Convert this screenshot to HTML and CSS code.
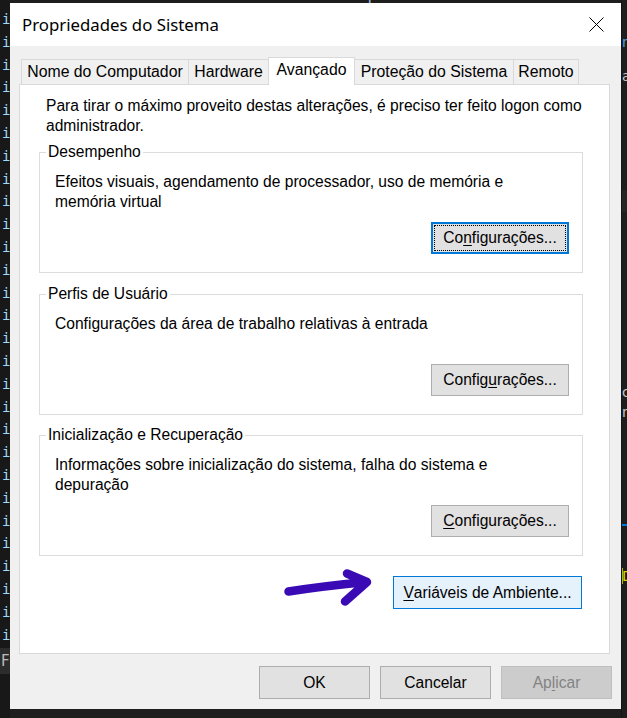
FILE: index.html
```html
<!DOCTYPE html>
<html lang="pt-BR">
<head>
<meta charset="utf-8">
<title>Propriedades do Sistema</title>
<link rel="stylesheet" href="styles.css">
</head>
<body>
<div class="editor">
  <div class="gutter">
    <span class="gl">i</span><span class="gl">i</span><span class="gl">i</span><span class="gl">i</span>
    <span class="gl">i</span><span class="gl">i</span><span class="gl">i</span><span class="gl">i</span>
    <span class="gl">i</span><span class="gl">i</span><span class="gl">i</span><span class="gl">i</span>
    <span class="gl">i</span><span class="gl">i</span><span class="gl">i</span><span class="gl">i</span>
    <span class="gl">i</span><span class="gl">i</span><span class="gl">i</span><span class="gl">i</span>
    <span class="gl">i</span><span class="gl">i</span><span class="gl">i</span><span class="gl">i</span>
    <span class="gl">i</span><span class="gl">i</span><span class="gl">i</span><span class="gl">i</span>
    <span class="gl gl-sel">F</span>
  </div>
  <div class="code">
    <div class="code-peek"># set up initial</div>
  </div>
  <div class="side">
    <span class="side-ch side-n">n</span>
    <span class="side-ch side-a">a</span>
    <span class="side-band"></span>
    <span class="side-ch side-c">c</span>
    <span class="side-ch side-m">n</span>
    <span class="side-line"></span>
    <span class="side-ch side-d">D</span>
  </div>
</div>

<div class="dialog">
  <div class="titlebar">
    <span class="title">Propriedades do Sistema</span>
    <svg class="close" width="15" height="15" viewBox="0 0 15 15" aria-label="Fechar">
      <path d="M0.5 0.5 L14.5 14.5 M14.5 0.5 L0.5 14.5" stroke="#000" stroke-width="1" fill="none"/>
    </svg>
  </div>
  <div class="client">
    <div class="tabs">
      <div class="tab tab-nome">Nome do Computador</div>
      <div class="tab tab-hw">Hardware</div>
      <div class="tab tab-av tab-active">Avançado</div>
      <div class="tab tab-prot">Proteção do Sistema</div>
      <div class="tab tab-rem">Remoto</div>
    </div>
    <div class="panel">
      <p class="intro">Para tirar o máximo proveito destas alterações, é preciso ter feito logon como<br>administrador.</p>

      <fieldset class="group">
        <legend>Desempenho</legend>
        <div class="group-body">
          <p class="group-text">Efeitos visuais, agendamento de processador, uso de memória e<br>memória virtual</p>
          <div class="group-actions">
            <button class="btn btn-cfg btn-focus"><span class="focus-rect">Co<u>n</u>figurações...</span></button>
          </div>
        </div>
      </fieldset>

      <fieldset class="group group-next">
        <legend>Perfis de Usuário</legend>
        <div class="group-body">
          <p class="group-text">Configurações da área de trabalho relativas à entrada</p>
          <div class="group-actions">
            <button class="btn btn-cfg">Config<u>u</u>rações...</button>
          </div>
        </div>
      </fieldset>

      <fieldset class="group group-last">
        <legend>Inicialização e Recuperação</legend>
        <div class="group-body">
          <p class="group-text">Informações sobre inicialização do sistema, falha do sistema e<br>depuração</p>
          <div class="group-actions">
            <button class="btn btn-cfg"><u>C</u>onfigurações...</button>
          </div>
        </div>
      </fieldset>

      <div class="env-row">
        <svg class="arrow" width="96" height="46" viewBox="0 0 96 46" aria-hidden="true">
          <path d="M8.5 26.5 Q44 21 86 17 M67 8.5 L87 17 L65 36.5" stroke="#3a0bb4" stroke-width="8.5" stroke-linecap="round" stroke-linejoin="round" fill="none"/>
        </svg>
        <button class="btn btn-env btn-hover"><u>V</u>ariáveis de Ambiente...</button>
      </div>
    </div>
    <div class="footer">
      <button class="btn btn-foot">OK</button>
      <button class="btn btn-foot">Cancelar</button>
      <button class="btn btn-foot btn-disabled">Ap<u>l</u>icar</button>
    </div>
  </div>
</div>
</body>
</html>
```

FILE: styles.css
```css
* {
  box-sizing: border-box;
}

html,
body {
  margin: 0;
  padding: 0;
}

body {
  width: 627px;
  height: 718px;
  overflow: hidden;
  position: relative;
  background: #1e1e1e;
  font-family: "Liberation Sans", Arial, sans-serif;
}

/* ---------- background editor ---------- */
.editor {
  display: flex;
  height: 718px;
}

.gutter {
  width: 10px;
  flex: none;
  background: #181818;
  padding-top: 8px;
  font-family: "DejaVu Sans Mono", monospace;
  font-size: 14px;
  line-height: 22.8px;
  color: #9cdcfe;
  overflow: hidden;
}

.gl {
  display: block;
  height: 22.8px;
  padding-left: 2px;
}

.gl-sel {
  margin-top: 2px;
  background: #2c2c2d;
  color: #bbbbbb;
  font-family: "DejaVu Sans", sans-serif;
  font-size: 15px;
  line-height: 26px;
  height: 26px;
  padding-left: 1px;
}

.code {
  flex: 1;
  background: #1e1e1e;
  overflow: hidden;
}

.code-peek {
  margin-top: -13px;
  padding-left: 290px;
  font-family: "DejaVu Sans Mono", monospace;
  font-size: 16px;
  line-height: 16px;
  color: #9cb8d8;
}

.side {
  width: 6px;
  flex: none;
  background: #1e1e1e;
  border-left: 1px solid #141414;
  display: flex;
  flex-direction: column;
  font-family: "DejaVu Sans", sans-serif;
  font-size: 14px;
  line-height: 16px;
  overflow: hidden;
}

.side-ch {
  display: block;
  height: 16px;
  color: #c8c8c8;
}

.side-n {
  margin-top: 34px;
  color: #4fa3e0;
}

.side-a {
  margin-top: 18px;
}

.side-band {
  display: block;
  height: 22px;
  margin-top: 106px;
  background: #252526;
}

.side-c {
  margin-top: 172px;
}

.side-m {
  margin-top: 4px;
}

.side-line {
  display: block;
  height: 2px;
  margin-top: 104px;
  background: #0078d4;
}

.side-d {
  margin-top: 42px;
  color: #d7d700;
  box-shadow: inset 1px 0 0 #b5b500;
}

/* ---------- dialog ---------- */
.dialog {
  position: absolute;
  left: 10px;
  top: 3px;
  width: 611px;
  height: 706px;
  background: #f0f0f0;
  display: flex;
  flex-direction: column;
}

.titlebar {
  height: 43px;
  flex: none;
  background: #ffffff;
  display: flex;
  align-items: center;
  justify-content: space-between;
  padding-left: 12px;
}

.title {
  font-family: "Noto Sans", sans-serif;
  font-size: 16.8px;
  color: #000;
}

.close {
  margin-right: 17px;
  display: block;
}

.client {
  flex: 1;
  display: flex;
  flex-direction: column;
  padding: 11px 9px 10px 9px;
}

/* tabs */
.tabs {
  display: flex;
  align-items: flex-end;
  height: 27px;
  padding-left: 2px;
}

.tab {
  height: 25px;
  margin-right: -1px;
  border: 1px solid #d9d9d9;
  border-bottom: none;
  background: #f0f0f0;
  font-size: 15.8px;
  line-height: 20px;
  padding-top: 2px;
  text-align: center;
  white-space: nowrap;
  color: #000;
}

.tab-nome { width: 168px; }
.tab-hw { width: 81px; }
.tab-av { width: 87px; }
.tab-prot { width: 160px; }
.tab-rem { width: 66px; }

.tab-active {
  height: 28px;
  margin-bottom: -1px;
  background: #ffffff;
  position: relative;
  z-index: 1;
}

/* panel */
.panel {
  width: 591px;
  height: 570px;
  flex: none;
  background: #ffffff;
  border: 1px solid #d9d9d9;
  padding: 11px 27px 0 19px;
}

.intro {
  margin: 0 0 0 7px;
  font-size: 15.6px;
  line-height: 20px;
  color: #000;
  white-space: nowrap;
}

.group {
  margin: 6px 0 0 0;
  width: 544px;
  min-width: 0;
  padding: 0;
  border: 1px solid #dcdcdc;
}

.group-next {
  margin-top: 11px;
}

.group-last {
  margin-top: 10px;
}

.group legend {
  margin-left: 6px;
  padding: 0 2px;
  font-size: 15.6px;
  line-height: 20px;
  color: #000;
}

.group-body {
  height: 110px;
  display: flex;
  flex-direction: column;
  padding: 10px 13px 18px 15px;
}

.group-text {
  margin: 0;
  font-size: 15.6px;
  line-height: 20px;
  color: #000;
  white-space: nowrap;
}

.group-actions {
  margin-top: auto;
  display: flex;
  justify-content: flex-end;
}

/* buttons */
.btn {
  font-family: "Liberation Sans", Arial, sans-serif;
  font-size: 15.6px;
  color: #000;
  background: #e1e1e1;
  border: 1px solid #adadad;
  border-radius: 0;
  padding: 0;
  margin: 0;
  display: flex;
  align-items: center;
  justify-content: center;
  white-space: nowrap;
}

.btn u {
  text-decoration-thickness: 1px;
  text-underline-offset: 2px;
}

.btn-cfg {
  width: 138px;
  height: 32px;
}

.btn-focus {
  border: 2px solid #0078d7;
  padding: 1px;
  align-items: stretch;
}

.focus-rect {
  flex: 1;
  display: flex;
  align-items: center;
  justify-content: center;
  border: 1px dotted #000;
}

.btn-hover {
  background: #e5f1fb;
  border-color: #0078d7;
}

.btn-env {
  width: 189px;
  height: 33px;
  margin-top: 11px;
}

.env-row {
  display: flex;
  justify-content: flex-end;
  align-items: flex-start;
  margin-top: 9px;
}

.arrow {
  display: block;
  margin-right: 17px;
}

.footer {
  display: flex;
  justify-content: flex-end;
  gap: 10px;
  padding-top: 12px;
}

.btn-foot {
  width: 111px;
  height: 33px;
}

.btn-disabled {
  background: #cccccc;
  border-color: #bfbfbf;
  color: #838383;
}
```
